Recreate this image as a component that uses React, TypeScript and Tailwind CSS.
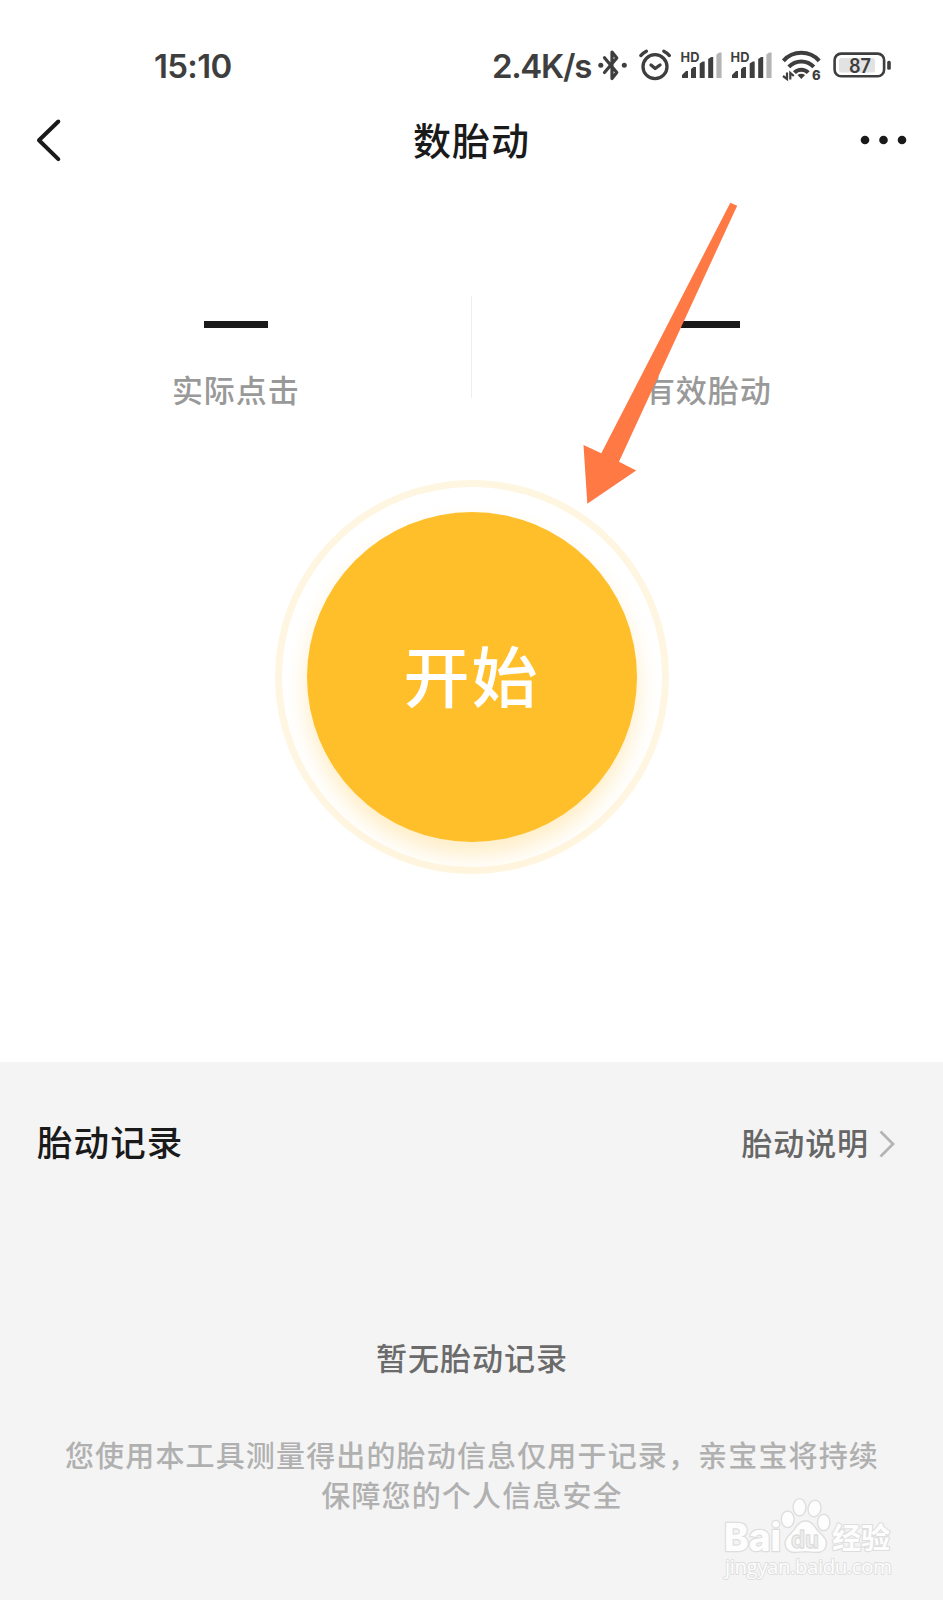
const stats = [
  { label: "实际点击", value: null },
  { label: "有效胎动", value: null },
];

const signalBars = [
  "M2 30v-3l4-4h2v7z",
  "M11 30v-9l2.5-2H16v11z",
  "M19.7 30V15.5l3-2h2V30z",
  "M28.2 30V11l3-2h2v21z",
];

function BluetoothIcon() {
  return (
    <svg width="34" height="36" viewBox="0 0 34 36" fill="none">
      <path
        d="M8.5 9.8 20.8 24.5l-4.8 6V4l4.8 6L8.5 24.5"
        stroke="#3e3e3e"
        strokeWidth="3.2"
        strokeLinecap="round"
        strokeLinejoin="round"
      />
      <circle cx="4.8" cy="17.2" r="2.5" fill="#3e3e3e" />
      <circle cx="28.3" cy="17.2" r="2.5" fill="#3e3e3e" />
    </svg>
  );
}

function AlarmIcon() {
  return (
    <svg
      className="ml-2"
      width="36"
      height="36"
      viewBox="0 0 36 36"
      fill="none"
      stroke="#3e3e3e"
      strokeWidth="3.3"
      strokeLinecap="round"
      strokeLinejoin="round"
    >
      <circle cx="17" cy="18.7" r="12" />
      <path d="M2.8 7.6Q5 5 8.4 3.3M25.8 3.3q3.4 1.7 5.6 4.3M13 17l4.2 3.5 4.8-3.5" />
    </svg>
  );
}

function SignalIcon() {
  return (
    <svg className="ml-1.5" width="43.5" height="36" viewBox="0 0 43.5 36">
      <text
        x="0.5"
        y="13.7"
        fontSize="12.8"
        fontWeight="700"
        fill="#3e3e3e"
        textLength="19"
      >
        HD
      </text>
      {signalBars.map((d) => (
        <path key={d} d={d} fill="#3e3e3e" />
      ))}
      <path d="M36.4 30V6.5l3-2h2.2V30z" fill="#b5b5b5" />
    </svg>
  );
}

function WifiIcon() {
  return (
    <svg className="ml-[7px]" width="42" height="36" viewBox="0 0 42 36" fill="none">
      <g stroke="#3e3e3e" strokeWidth="4">
        <path d="M3.4 12.8a24 24 0 0 1 35.8 0" />
        <path d="M8.8 18.9a17 17 0 0 1 25 0" />
        <path d="M14.4 24.6a9.5 9.5 0 0 1 13.8 0" />
      </g>
      <path d="M17.5 27q3.8-2.6 7.6 0l-3.8 4z" fill="#3e3e3e" />
      <path
        d="M7 24.5V31l-4-3M10.3 31.5V25l3.5 3"
        stroke="#3e3e3e"
        strokeWidth="2.2"
      />
      <text x="32" y="32" fontSize="13" fontWeight="800" fill="#3e3e3e">
        6
      </text>
    </svg>
  );
}

function BatteryIcon() {
  return (
    <svg className="ml-2.5" width="60" height="36" viewBox="0 0 60 36" fill="none">
      <rect x="2.6" y="5.6" width="49.5" height="22.6" rx="6.5" stroke="#3e3e3e" strokeWidth="2.6" />
      <rect x="7" y="10" width="36" height="14.5" rx="2.5" fill="#e2e2e2" />
      <rect x="55.2" y="12.8" width="3.6" height="9" rx="1.6" fill="#3e3e3e" />
      <text
        x="17"
        y="24.5"
        fontSize="19.5"
        fontWeight="600"
        fill="#3e3e3e"
        textLength="22"
        lengthAdjust="spacingAndGlyphs"
      >
        87
      </text>
    </svg>
  );
}

function StatusBar() {
  return (
    <div className="flex h-[84px] items-center pt-12 pr-[51px] pl-[154px] text-[#3e3e3e]">
      <span className="pt-px text-[33px] font-semibold tracking-[-0.7px]">15:10</span>
      <span className="mr-[5px] ml-auto pt-px text-[33px] font-semibold tracking-[-1.3px]">
        2.4K/s
      </span>
      <BluetoothIcon />
      <AlarmIcon />
      <SignalIcon />
      <SignalIcon />
      <WifiIcon />
      <BatteryIcon />
    </div>
  );
}

function Header() {
  return (
    <header className="flex h-28 items-center justify-between px-9">
      <svg width="48" height="48" viewBox="0 0 48 48" fill="none">
        <path
          d="M22.3 5.5 3 24.3l19.3 18.8"
          stroke="#1a1a1a"
          strokeWidth="4"
          strokeLinecap="round"
          strokeLinejoin="round"
        />
      </svg>
      <h1 className="pt-[2px] text-[38px] font-medium tracking-[1px] text-[#1a1a1a]">
        数胎动
      </h1>
      <svg width="48" height="48" viewBox="0 0 48 48" fill="#1a1a1a">
        <circle cx="6" cy="24" r="4.3" />
        <circle cx="24.5" cy="24" r="4.3" />
        <circle cx="43" cy="24" r="4.3" />
      </svg>
    </header>
  );
}

function Arrow() {
  return (
    <svg
      className="absolute top-[200px] left-[580px]"
      width="160"
      height="308"
      viewBox="0 0 160 308"
    >
      <path
        d="M7.3 303.7 3.5 245l17.8 8.3L150.3 2.7l6.9 3L39 261.7l17.2 8.8z"
        fill="#ff7945"
      />
    </svg>
  );
}

function Watermark() {
  return (
    <svg
      className="absolute right-[46px] bottom-4"
      width="176"
      height="90"
      viewBox="0 0 176 90"
      fill="#fdfdfd"
      stroke="#dedede"
      strokeWidth="1.4"
      strokeLinejoin="round"
    >
      <text
        x="3"
        y="57"
        fontSize="38"
        fontWeight="800"
        strokeWidth="2.4"
        textLength="57"
        lengthAdjust="spacingAndGlyphs"
        className="[paint-order:stroke]"
      >
        Bai
      </text>
      <ellipse cx="66.7" cy="25.3" rx="6.4" ry="8.3" />
      <ellipse cx="78.5" cy="13.3" rx="6.4" ry="8.7" />
      <ellipse cx="93.5" cy="14.5" rx="6.4" ry="8.3" transform="rotate(12 93.5 14.5)" />
      <ellipse cx="102.7" cy="28.5" rx="6.2" ry="8.2" />
      <path d="M84.500 27c-5 0-8 3-10.5 7.5-3 5-10 8-10 14.5 0 6 4 9.5 9.5 9.5 4 0 6.5-.8 11-.8s7 .8 11 .8c6 0 10-3.5 10-9.500 0-6.500-7-9.500-10.500-14.500C92.500 30 89.500 27 84.500 27z" />
      <text
        x="70"
        y="54"
        fontSize="24"
        fontWeight="700"
        textLength="28"
        fill="#f0f0f0"
        lengthAdjust="spacingAndGlyphs"
      >
        du
      </text>
      <text
        x="111"
        y="54.5"
        fontSize="29"
        fontWeight="700"
        strokeWidth="2.2"
        textLength="58"
        className="[paint-order:stroke]"
      >
        经验
      </text>
      <text
        x="4"
        y="79.5"
        fontSize="20.5"
        textLength="167"
        strokeWidth="1.8"
        className="font-['Open_Sans',sans-serif] [paint-order:stroke]"
      >
        jingyan.baidu.com
      </text>
    </svg>
  );
}

export default function App() {
  return (
    <div className="relative flex h-[1600px] w-[943px] flex-col overflow-hidden bg-white font-['Inter','Noto_Sans_CJK_SC',sans-serif]">
      <StatusBar />
      <Header />

      <section className="mt-[100px] grid h-[102px] grid-cols-2 grid-rows-[102px] divide-x divide-[#eeeeee]">
        {stats.map((stat) => (
          <div key={stat.label} className="flex flex-col items-center pt-[25px] pl-px">
            <div className="h-[7px] w-16 shrink-0 bg-[#1a1a1a]">{stat.value}</div>
            <span className="mt-[39px] text-[31px] leading-[48px] font-medium tracking-[0.9px] text-[#999999]">
              {stat.label}
            </span>
          </div>
        ))}
      </section>

      <div className="mt-[82px] flex justify-center">
        <div className="flex size-[394px] items-center justify-center rounded-full border-[7px] border-[#fff6e2]">
          <button className="size-[330px] rounded-full bg-[#ffbf2b] pt-[2px] text-[66px] font-medium tracking-[2px] text-white shadow-[0_13px_22px_rgba(255,191,43,0.28)]">
            开始
          </button>
        </div>
      </div>

      <section className="mt-[188px] flex-1 bg-[#f4f4f4]">
        <div className="flex items-center justify-between pt-[53px] pr-[46px] pl-[37px]">
          <h2 className="text-[35.5px] leading-[56px] font-medium tracking-[1.1px] text-[#1a1a1a]">
            胎动记录
          </h2>
          <a className="flex items-center text-[31px] leading-[56px] font-medium tracking-[0.9px] text-[#666666]">
            <span className="pt-px">胎动说明</span>
            <svg className="ml-2" width="20" height="32" viewBox="0 0 20 32" fill="none">
              <path d="M3.5 3.5 16 16 3.5 28.5" stroke="#b4b4b4" strokeWidth="2.8" />
            </svg>
          </a>
        </div>
        <p className="mt-[163px] pl-px text-center text-[31px] leading-[48px] font-medium tracking-[1px] text-[#6b6b6b]">
          暂无胎动记录
        </p>
        <p className="mt-[54px] pl-px text-center text-[29px] leading-10 font-medium tracking-[1.15px] text-[#b0b0b0]">
          您使用本工具测量得出的胎动信息仅用于记录，亲宝宝将持续
          <br />
          保障您的个人信息安全
        </p>
      </section>

      <Arrow />
      <Watermark />
    </div>
  );
}
